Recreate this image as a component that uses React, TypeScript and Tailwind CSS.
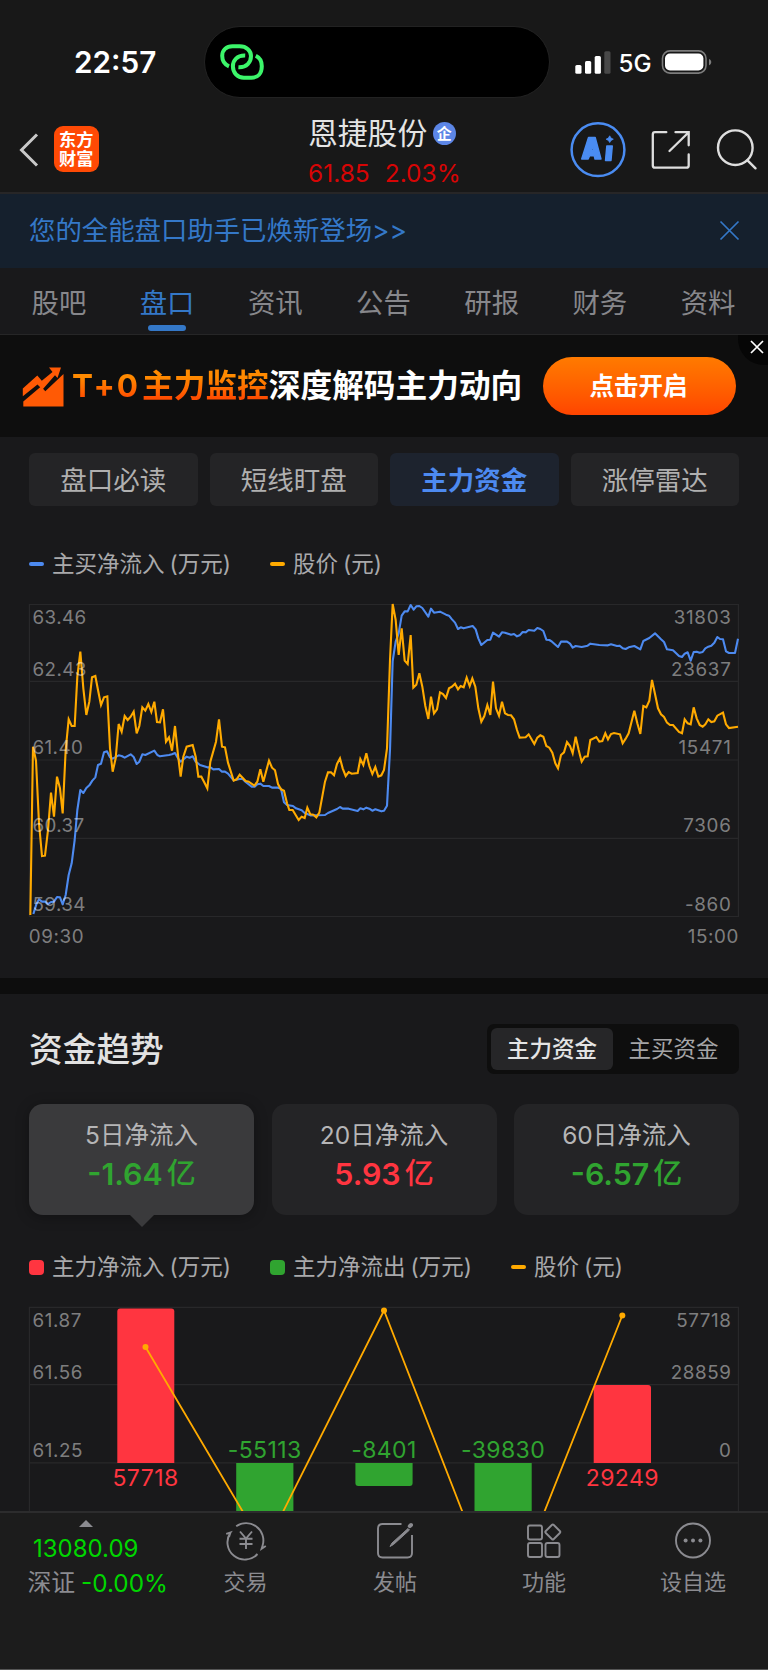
import type { ReactNode } from "react";

type Segment = [number, string];

// Each segment holds "x,y" samples at triple resolution plus its own horizontal origin.
const PRICE: Segment[] = [
  [60, "31,975 39,470 48,512 57,700 66,798 75,797 84,720 93,608 102,680 111,560 120,595 128,670 137,480 146,388 155,408 164,408 172,260 181,185 190,295 199,375 208,335 216,262 226,258 234,300 243,345 252,322 262,319 270,475 278,545 287,505 296,402 305,425 314,378 323,390 332,380 341,365 350,430 358,408 367,352 376,362 385,342 394,366 403,335 411,396 420,397 429,358 438,455 447,442 456,482 465,408 474,495 482,560 490,500 500,470 518,465 527,500 535,560"],
  [600, "4,560 12,575 22,595 31,515 48,455 57,388 66,470 75,472 84,518 101,572 110,568 119,554 137,573 146,575 163,587 172,575 181,538 190,575 198,545 207,512 216,533 225,541 234,582 243,598 252,602 261,640 268,660 278,660 296,690 305,680 314,684 322,653 331,673 340,674 349,682 358,668 375,575 384,547 393,547 402,556 411,522 420,505 428,535 437,558 446,546 455,551 473,549 481,507 490,525 499,490 508,528 517,552 526,531 535,560 544,556 552,540 561,475 570,210"],
  [1140, "38,42 47,90 56,195 65,115 74,212 83,222 92,135 100,293 109,284 118,250 127,290 136,348 145,387 153,320 162,370 171,358 180,307 189,312 198,324 207,295 216,290 225,281 234,298 242,288 251,292 260,263 269,288 277,265 286,290 295,355 304,395 313,378 322,345 331,375 339,275 348,355 357,377 366,335 375,370 384,375 393,376 402,388 411,420 419,443 437,442 446,433 463,462 472,443 481,436 490,440 499,468 508,473 517,488 526,520 534,535"],
  [1680, "3,495 12,487 21,456 30,468 38,490 47,440 56,480 65,515 74,500 83,499 91,450 109,441 118,455 127,453 136,430 144,448 153,432 162,429 180,433 188,460 197,446 206,430 223,362 232,400 241,432 250,348 259,352 268,332 276,270 285,312 294,355 303,373 312,381 321,398 330,405 339,405 357,426 366,430 374,388 383,400 392,403 401,352 410,385 419,405 428,410 436,403 445,388 454,396 463,394 472,377 489,368 498,403 507,414 534,410"],
];

const INFLOW: Segment[] = [
  [60, "40,972 49,943 57,928 66,935 75,935 84,942 93,936 102,935 111,921 120,922 128,943 137,915 146,855 155,820 164,750 172,660 181,600 190,609 199,594 208,586 217,572 226,562 234,525 243,521 252,487 261,484 270,502 278,506 296,496 305,498 314,503 332,493 341,501 350,522 358,515 367,493 376,495 403,482 412,495 420,499 447,495 456,493 465,489 474,505 482,515 500,500 509,503 518,499 527,515"],
  [600, "0,525 22,532 31,532 40,538 57,537 66,545 75,545 84,551 101,571 119,567 128,567 137,576 155,590 164,590 172,583 181,581 190,588 207,588 216,593 234,593 243,596 252,637 261,645 279,648 288,655 305,661 314,669 331,676 375,675 384,669 411,657 420,651 428,656 446,656 473,663 481,655 490,658 499,653 508,656 517,662 526,658 544,664 552,662 561,647 570,480"],
  [1140, "38,213 47,155 56,130 65,77 74,64 83,64 92,45 101,59 109,49 118,48 127,54 145,80 153,56 162,68 180,65 198,74 207,77 216,88 225,98 234,117 242,112 251,115 278,108 287,118 295,145 304,165 322,150 331,149 339,128 357,140 366,127 375,128 393,134 402,132 411,139 419,136 428,126 437,127 446,120 463,122 472,114 481,117 490,123 499,149 508,150 516,155 534,171"],
  [1680, "3,155 21,155 30,161 38,173 47,168 65,171 83,167 91,161 118,165 144,166 153,163 171,168 179,167 188,175 197,177 206,172 223,168 241,178 250,153 268,144 285,130 303,148 312,156 321,178 339,181 357,198 366,201 374,191 383,187 392,212 401,186 410,185 419,188 428,186 436,175 445,170 454,167 463,158 472,141 480,147 489,148 498,184 507,189 525,189 534,146"],
];

function toPoints(segments: Segment[]): string {
  return segments
    .flatMap(([dx, raw]) =>
      raw.split(" ").map((pair) => {
        const [x, y] = pair.split(",").map(Number);
        return `${((x + dx) / 3).toFixed(2)},${(y / 3).toFixed(2)}`;
      }),
    )
    .join(" ");
}

const AXIS = "fill-white/45 text-[18.8px]";

function FlowChart() {
  const rows: [number, string, string][] = [
    [33.7, "63.46", "31803"],
    [85.7, "62.43", "23637"],
    [163.7, "61.40", "15471"],
    [242.2, "60.37", "7306"],
    [320.5, "59.34", "-860"],
  ];
  return (
    <svg width="768" height="388" viewBox="0 0 768 388" className="block shrink-0">
      <g stroke="#28282a" strokeWidth="1.2" fill="none">
        {[14.5, 91.4, 170, 248.4, 326.5].map((y) => (
          <line key={y} x1="29" x2="739" y1={y} y2={y} />
        ))}
        <line x1="29.4" x2="29.4" y1="14" y2="327" />
        <line x1="738.4" x2="738.4" y1="14" y2="327" />
      </g>
      <polyline points={toPoints(INFLOW)} fill="none" stroke="#4d8af0" strokeWidth="2.1" strokeLinejoin="round" />
      <polyline points={toPoints(PRICE)} fill="none" stroke="#ffaa00" strokeWidth="2.1" />
      {rows.map(([y, left, right]) => (
        <g key={left} className={AXIS}>
          <text x="32.5" y={y} letterSpacing="0.4">{left}</text>
          <text x="731.5" y={y} textAnchor="end" letterSpacing="0.7">{right}</text>
        </g>
      ))}
      <g className={AXIS} letterSpacing="0.6">
        <text x="28.8" y="353.3">09:30</text>
        <text x="739" y="353.3" textAnchor="end">15:00</text>
      </g>
    </svg>
  );
}

function TrendChart() {
  const rows: [number, string, string][] = [
    [27.4, "61.87", "57718"],
    [79.2, "61.56", "28859"],
    [157.2, "61.25", "0"],
  ];
  return (
    <svg width="768" height="211" viewBox="0 0 768 211" className="block shrink-0">
      <g stroke="#28282a" strokeWidth="1.2">
        {[7.4, 84.6, 162.8].map((y) => (
          <line key={y} x1="29" x2="739" y1={y} y2={y} />
        ))}
        <line x1="29.4" x2="29.4" y1="7" y2="211" />
        <line x1="738.4" x2="738.4" y1="7" y2="211" />
      </g>
      <g fill="#ff3540">
        <path d="M117.3 163V11.5q0-3 3-3h51q3 0 3 3V163z" />
        <path d="M593.7 163V88q0-3 3-3h51.3q3 0 3 3v75z" />
      </g>
      <g fill="#30a430">
        <rect x="236.2" y="163" width="57.2" height="60" />
        <path d="M355.4 163h57.2v20q0 3-3 3h-51.2q-3 0-3-3z" />
        <rect x="474.5" y="163" width="57.2" height="60" />
      </g>
      <polyline points="145.5,47 264.6,248.5 384,10.5 503,316 622.3,15.5" fill="none" stroke="#ffaa00" strokeWidth="1.8" />
      <g fill="#ffaa00">
        <circle cx="145.5" cy="47" r="3" />
        <circle cx="384" cy="10.5" r="3" />
        <circle cx="622.3" cy="15.5" r="3" />
      </g>
      {rows.map(([y, left, right]) => (
        <g key={left} className={AXIS} letterSpacing="0.6">
          <text x="32.5" y={y}>{left}</text>
          <text x="731.5" y={y} textAnchor="end">{right}</text>
        </g>
      ))}
      <g className="text-[23px]" letterSpacing="0.4" textAnchor="middle">
        <text x="145.5" y="186" fill="#ff3540">57718</text>
        <text x="264.7" y="158.3" fill="#30a430">-55113</text>
        <text x="384" y="158.3" fill="#30a430">-8401</text>
        <text x="503" y="158.3" fill="#30a430">-39830</text>
        <text x="622.3" y="186" fill="#ff3540">29249</text>
      </g>
    </svg>
  );
}

function StatusBar() {
  return (
    <div className="flex h-[102px] items-start">
      <div className="w-[204px] pt-[42px] pl-[74px] text-[29.7px] leading-[40px] font-semibold text-white">22:57</div>
      <div className="mt-[26px] h-[72px] w-[346px] rounded-full border border-[#222] bg-black pt-[17px] pl-[15px]">
        <svg width="44" height="36" viewBox="0 0 44 36" fill="none" stroke="#3cf56a" strokeWidth="4">
          <path d="M9 22.4C4.5 20.5 2.2 16.6 2.2 11.8 2.2 6 6.3 2.3 12.5 2.3h7.2c6.8 0 11.3 4.3 11.3 9.8 0 6-4.3 11.7-12.6 11.2" />
          <path d="M25.2 11.6c-8.2-.3-12.3 4.8-12.3 10.6 0 6.3 4.4 11.5 11 11.5h7.6c6.3 0 10.3-4.4 10.3-11.5 0-5.200-2.200-8.600-6-10.400" />
        </svg>
      </div>
      <svg width="150" height="30" viewBox="0 0 150 30" className="mt-[48px] ml-[23px]">
        <g fill="#fff">
          <rect x="2.3" y="17" width="6.2" height="8.7" rx="1.5" />
          <rect x="12" y="13" width="6.2" height="12.7" rx="1.5" />
          <rect x="21.7" y="8" width="6.2" height="17.7" rx="1.5" />
        </g>
        <rect x="31.3" y="3.3" width="6.2" height="22.4" rx="1.5" fill="#484848" />
        <text x="45.5" y="24.3" fill="#fff" className="text-[24.5px] font-medium" textLength="33" lengthAdjust="spacingAndGlyphs">5G</text>
        <rect x="89.5" y="2.9" width="43.5" height="22.2" rx="7.5" fill="none" stroke="#7c7c7c" strokeWidth="1.6" />
        <rect x="92" y="5.6" width="38.4" height="16.9" rx="5" fill="#fff" />
        <path d="M136 11c3 1.200 3 5 0 6.200z" fill="#7c7c7c" />
      </svg>
    </div>
  );
}

function TitleBar() {
  return (
    <div className="flex h-[90px] items-start">
      <svg width="22" height="36" viewBox="0 0 22 36" className="mt-[30px] ml-[18px]" fill="none" stroke="#c9c9c9" strokeWidth="3">
        <path d="M19 2.5 3.5 18 19 33.5" />
      </svg>
      <div className="mt-[24px] ml-[13.5px] flex h-[46px] w-[45.5px] flex-col items-center justify-center rounded-[9px] bg-[#ff4a05] text-[17.2px] leading-[19px] font-bold text-white">
        <span>东方</span>
        <span>财富</span>
      </div>
      <div className="ml-[209px] w-[162px]">
        <div className="mt-[11px] flex h-[40px] items-center">
          <span className="text-[29.8px] leading-[40px] text-[#e4e4e4]">恩捷股份</span>
          <span className="ml-[5.5px] flex size-[23px] items-center justify-center rounded-full bg-[#5c86e6] text-[15px] leading-none font-bold text-white">企</span>
        </div>
        <div className="mt-[3px] flex h-[34px] items-center gap-[15px] text-[24.5px] leading-[34px] text-[#d60505]">
          <span>61.85</span>
          <span>2.03%</span>
        </div>
      </div>
      <svg width="208" height="60" viewBox="0 0 208 60" className="mt-[18px] ml-[90px]" fill="none">
        <circle cx="38" cy="29.7" r="26.4" stroke="#4a8cf2" strokeWidth="2.5" />
        <g fill="#4a8cf2" stroke="#4a8cf2" strokeWidth="1.4" strokeLinejoin="round">
          <path fillRule="evenodd" d="M28.5 17.5h6.700l5.800 21.500h-6l-.8-3.200h-4.600L28.200 39h-6.500zM31.300 30.500h2.300l-.8-4.500z" />
          <path d="M46.800 26h5.500L51 40.500h-5.500z" />
          <path d="M49.700 15.800 51 18.100l2.300 1.100L51 20.400l-1.300 2.100-1.300-2.100-2.300-1.200 2.300-1.100z" strokeWidth=".8" />
        </g>
        <g stroke="#dedede" strokeWidth="2.3" strokeLinecap="round">
          <path d="M106.300 12.200H95q-2.200 0-2.200 2.200v31q0 2.200 2.200 2.200h31.500q2.200 0 2.200-2.200V34.500" />
          <path d="M115.500 12.200h13.200v13.100M128.200 12.700 109.500 31" />
        </g>
        <g stroke="#dedede" strokeWidth="2.4" strokeLinecap="round">
          <circle cx="175.3" cy="27.7" r="17.3" />
          <path d="m187.500 40.300 8 8" />
        </g>
      </svg>
    </div>
  );
}

function Notice() {
  return (
    <div className="flex h-[76px] items-center justify-between border-t-2 border-[#272627] bg-[#15202d] pr-[28px] pb-[2px] pl-[29px]">
      <span className="text-[26.4px] leading-[40px] text-[#3478c8]">您的全能盘口助手已焕新登场&gt;&gt;</span>
      <svg width="21" height="21" viewBox="0 0 21 21" stroke="#3478c8" strokeWidth="1.7">
        <path d="m1.5 1.5 18 18m0-18-18 18" />
      </svg>
    </div>
  );
}

function Tabs() {
  const tabs = ["股吧", "盘口", "资讯", "公告", "研报", "财务", "资料"];
  return (
    <div className="flex h-[67px] justify-between border-b border-[#262627] bg-[#19191b] pt-[15px] pr-[32.5px] pl-[31.5px]">
      {tabs.map((tab) => (
        <div key={tab} className="flex flex-col items-center">
          <span className={tab === "盘口" ? "text-[27.4px] leading-[40px] text-[#3478c8]" : "text-[27.4px] leading-[40px] text-[#87878b]"}>{tab}</span>
          {tab === "盘口" && <span className="mt-[2px] h-[6px] w-[38px] rounded-[3px] bg-[#3478c8]" />}
        </div>
      ))}
    </div>
  );
}

function Promo() {
  return (
    <div className="relative flex h-[102px] items-center bg-[#0e0e0e] pl-[22px]">
      <svg width="43" height="40" viewBox="0 0 43 40" className="mt-[2px]" fill="#ff5a05">
        <path d="M.8 29.300V21.500L15.300 8.500l4.500 5.200L30.500 5 27 .5h12L35.500 11 33 8.300 20.500 22.500l-5-5z" />
        <path d="M1.300 39.500v-5L19 19.500l4.300 4.800L41.500 7v32.500z" />
      </svg>
      <span className="ml-[7px] bg-gradient-to-b from-[#ff8a00] from-30% to-[#ff4d00] to-75% bg-clip-text text-[31.7px] leading-[46px] font-bold whitespace-nowrap text-transparent">
        <span className="inline-block w-[70px] text-[31.500px] leading-[40px] tracking-[2px]">T+0</span>主力监控
      </span>
      <span className="text-[31.7px] leading-[46px] font-bold whitespace-nowrap text-white">深度解码主力动向</span>
      <div className="mr-[32px] ml-auto flex h-[58px] w-[193px] items-center justify-center rounded-full bg-gradient-to-b from-[#ff7a00] to-[#ff4400] pr-[2px] text-[24.5px] font-bold text-white">点击开启</div>
      <div className="absolute top-0 right-0 h-[30px] w-[30px] rounded-bl-[26px] bg-[#060606]">
        <svg width="14" height="14" viewBox="0 0 14 14" className="mt-[4.5px] ml-[11.5px]" stroke="#fff" strokeWidth="1.7">
          <path d="m1 1 12 12M13 1 1 13" />
        </svg>
      </div>
    </div>
  );
}

function Chips() {
  const chips = ["盘口必读", "短线盯盘", "主力资金", "涨停雷达"];
  return (
    <div className="grid h-[69px] grid-cols-4 gap-[12px] px-[29px] pt-[16px]">
      {chips.map((chip) => (
        <div
          key={chip}
          className={
            chip === "主力资金"
              ? "flex h-[53px] items-center justify-center rounded-[6px] bg-[#1d232e] pt-[2px] text-[26.5px] font-bold text-[#4d8af0]"
              : "flex h-[53px] items-center justify-center rounded-[6px] bg-[#242426] pt-[2px] text-[26.5px] text-[#b0b0b0]"
          }
        >
          {chip}
        </div>
      ))}
    </div>
  );
}

function LegendItem({ mark, width, unit, children }: { mark: string; width: string; unit: string; children: ReactNode }) {
  return (
    <div className={`flex shrink-0 items-center ${width}`}>
      <span className={`w-[15px] ${mark}`} />
      <span className="ml-[8px] text-[22.5px] leading-[30px] whitespace-nowrap text-[#a9a9ab]">
        {children}
        <span className="ml-[5px]">({unit})</span>
      </span>
    </div>
  );
}

function PeriodCard({ label, value, tone, active }: { label: string; value: string; tone: string; active?: boolean }) {
  return (
    <div
      className={
        active
          ? "relative h-[111px] rounded-[14px] bg-[#3a3a3c] pt-[14px] text-center shadow-[0_2px_14px_rgba(0,0,0,0.3)]"
          : "relative h-[111px] rounded-[14px] bg-[#242426] pt-[14px] text-center"
      }
    >
      <div className="text-[24.5px] leading-[34px] text-[#b5b5b6]">{label}</div>
      <div className={`flex items-center justify-center text-[30.3px] leading-[44px] font-semibold ${tone}`}>
        {value}
        <span className="ml-[4px] text-[29px] font-medium">亿</span>
      </div>
      {active && (
        <svg width="24" height="12" viewBox="0 0 24 12" className="absolute top-full left-[100.5px]">
          <path d="M0 0h24L12 12z" fill="#3a3a3c" />
        </svg>
      )}
    </div>
  );
}

function NavItem({ label, icon, className }: { label: string; icon: ReactNode; className: string }) {
  return (
    <div className={`flex flex-col items-center ${className}`}>
      <svg width="44" height="40" viewBox="0 0 44 40" className="mt-[8px]" fill="none" stroke="#8b8b90" strokeWidth="1.9">
        {icon}
      </svg>
      <span className="mt-[5px] text-[22px] leading-[32px] text-[#8b8b90]">{label}</span>
    </div>
  );
}

function BottomBar() {
  return (
    <div className="flex h-[159px] border-t-2 border-b border-t-[#2c2c2d] border-b-[#555] bg-[#1c1c1c]">
      <div className="flex w-[193px] flex-col pt-[7px]">
        <svg width="14" height="7" viewBox="0 0 14 7" className="ml-[79px]">
          <path d="M7 0l7 7H0z" fill="#8b8b90" />
        </svg>
        <span className="mt-[6px] ml-[33px] text-[24px] leading-[32px] text-[#00d600]">13080.09</span>
        <div className="mt-[1.5px] ml-[27.5px] flex items-center text-[23.8px] leading-[32px] whitespace-nowrap text-[#8b8b90]">
          深证<span className="ml-[6px] text-[24.3px] text-[#00d600]">-0.00%</span>
        </div>
      </div>
      <NavItem
        label="交易"
        className="w-[105px]"
        icon={
          <g>
            <path d="M12.2 5.2A17.3 17.3 0 0 1 38.6 24.5l-1 3.200 4.200-2.700M33.500 33A17.300 17.300 0 0 1 6.500 11.500l-4.300 1.300M6.500 11.500 5 16" />
            <path d="m16 10.500 6 7 6-7M22 17.500V28M15.500 17.800h13M15.500 23h13" />
          </g>
        }
      />
      <NavItem
        label="发帖"
        className="ml-[44.5px] w-[105px]"
        icon={
          <g>
            <path d="M28.500 3H9.500Q5 3 5 7.500v24.500q0 4.500 4.500 4.500h25q4.500 0 4.500-4.500V14" />
            <path d="M35 7.500 19 22l-2 3.500 3.500-2L36.500 9z" fill="#8b8b90" strokeWidth="1" />
            <path d="m36.800 5.200 1.200-1.200" strokeWidth="4" strokeLinecap="round" />
          </g>
        }
      />
      <NavItem
        label="功能"
        className="ml-[44px] w-[105px]"
        icon={
          <g>
            <rect x="6" y="4.5" width="14" height="14" rx="2" />
            <rect x="6" y="22" width="14" height="14" rx="2" />
            <rect x="23.5" y="22" width="14" height="14" rx="2" />
            <path d="m29.800 4-6 6q-1 1 0 2l6 6q1 1 2 0l6-6q1-1 0-2l-6-6q-1-1-2 0z" />
          </g>
        }
      />
      <NavItem
        label="设自选"
        className="ml-[44px] w-[105px]"
        icon={
          <g>
            <circle cx="22" cy="19.5" r="17" />
            <g fill="#8b8b90" stroke="none">
              <circle cx="14.6" cy="19.5" r="2" />
              <circle cx="22" cy="19.5" r="2" />
              <circle cx="29.4" cy="19.5" r="2" />
            </g>
          </g>
        }
      />
    </div>
  );
}

export default function App() {
  return (
    <div className="flex h-[1670px] w-[768px] flex-col overflow-hidden bg-[#181818] font-[Inter,'Noto_Sans_CJK_SC',sans-serif]">
      <StatusBar />
      <TitleBar />
      <Notice />
      <Tabs />
      <Promo />
      <div className="flex h-[541px] flex-col bg-[#19191b]">
        <Chips />
        <div className="mt-[43px] flex h-[30px] px-[29px]">
          <LegendItem mark="h-[4px] rounded-[2px] bg-[#4d8af0]" width="w-[241px]" unit="万元">主买净流入</LegendItem>
          <LegendItem mark="h-[4px] rounded-[2px] bg-[#ffaa00]" width="w-[241px]" unit="元">股价</LegendItem>
        </div>
        <div className="mt-[11px] shrink-0">
          <FlowChart />
        </div>
      </div>
      <div className="h-[16px] shrink-0 bg-[#0d0d0d]" />
      <div className="flex h-[517px] shrink-0 flex-col overflow-hidden bg-[#19191b]">
        <div className="mt-[30px] flex h-[50px] items-center justify-between px-[29px]">
          <h2 className="pt-[2px] text-[33.7px] leading-[48px] font-medium text-[#e2e2e2]">资金趋势</h2>
          <div className="flex h-[50px] w-[252px] items-center rounded-[7px] bg-[#0e0e0e] p-[4px] text-[22.5px]">
            <span className="flex h-[42px] w-[122px] items-center justify-center rounded-[6px] bg-[#262628] font-medium text-[#e4e4e4]">主力资金</span>
            <span className="flex h-[42px] w-[121px] items-center justify-center text-[#a5a5a7]">主买资金</span>
          </div>
        </div>
        <div className="mt-[30px] grid grid-cols-3 gap-[17.5px] px-[29px]">
          <PeriodCard label="5日净流入" value="-1.64" tone="text-[#30a430]" active />
          <PeriodCard label="20日净流入" value="5.93" tone="text-[#ff3540]" />
          <PeriodCard label="60日净流入" value="-6.57" tone="text-[#30a430]" />
        </div>
        <div className="mt-[37px] flex h-[30px] shrink-0 px-[29px]">
          <LegendItem mark="h-[15px] rounded-[4px] bg-[#ff3540]" width="w-[241px]" unit="万元">主力净流入</LegendItem>
          <LegendItem mark="h-[15px] rounded-[4px] bg-[#30a430]" width="w-[241px]" unit="万元">主力净流出</LegendItem>
          <LegendItem mark="h-[4px] rounded-[2px] bg-[#ffaa00]" width="w-[150px]" unit="元">股价</LegendItem>
        </div>
        <div className="mt-[18px] shrink-0">
          <TrendChart />
        </div>
      </div>
      <BottomBar />
    </div>
  );
}
